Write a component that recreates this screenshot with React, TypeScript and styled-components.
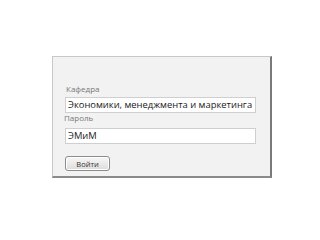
import React from 'react';
import styled, { createGlobalStyle } from 'styled-components';

const GlobalStyle = createGlobalStyle`
 html, body {
  margin: 0;
  padding: 0;
  background: #ffffff;
 }
 body {
  font-family: 'Open Sans', 'Noto Sans', sans-serif;
 }
`;

const Page = styled.div`
 width: 320px;
 height: 240px;
 padding: 56px 0 0 52px;
 box-sizing: border-box;
`;

const Panel = styled.div`
 width: 220px;
 height: 122px;
 box-sizing: border-box;
 background: #f2f2f2;
 border: 1px solid #c8c8c8;
 border-right: 2px solid #7a7a7a;
 border-bottom: 2px solid #8a8a8a;
 padding: 27px 14px 0 11px;
 display: flex;
 flex-direction: column;
`;

const Label = styled.div<{ $indent?: number }>`
 font-size: 8px;
 font-weight: 400;
 line-height: 10px;
 color: #777;
 margin-left: ${(p) => p.$indent ?? 0}px;
`;

const Field = styled.div<{ $gap: number }>`
 height: 16px;
 box-sizing: border-box;
 margin: ${(p) => p.$gap}px 0 0 1px;
 background: #fff;
 border: 1px solid #cfcfcf;
 font-size: 9.4px;
 line-height: 14px;
 color: #1a1a1a;
 padding-left: 2px;
 white-space: nowrap;
 overflow: hidden;
`;

const Button = styled.button`
 margin: 12px 0 0 1px;
 width: 45px;
 height: 15px;
 padding: 0;
 box-sizing: border-box;
 border: 1px solid #8c8c8c;
 border-radius: 3px;
 background: linear-gradient(#f8f8f8, #dcdcdc);
 box-shadow: inset 0 0 0 1px #fff;
 font-family: 'Open Sans', 'Noto Sans', sans-serif;
 font-size: 7.5px;
 color: #333;
 text-align: center;
 line-height: 12px;
`;

export default function App() {
 return (
  <>
   <GlobalStyle />
   <Page>
    <Panel>
     <Label $indent={2}>Кафедра</Label>
     <Field $gap={3}>Экономики, менеджмента и маркетинга</Field>
     <Label>Пароль</Label>
     <Field $gap={5}>ЭМиМ</Field>
     <Button>Войти</Button>
    </Panel>
   </Page>
  </>
 );
}
